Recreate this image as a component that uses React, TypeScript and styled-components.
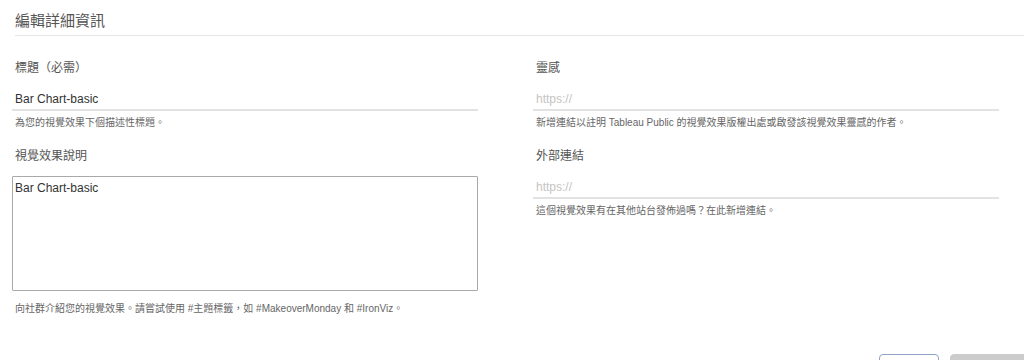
import React from "react";
import styled, { createGlobalStyle } from "styled-components";

const Global = createGlobalStyle`
  html, body { margin: 0; padding: 0; background: #fff; }
  body {
    font-family: "Liberation Sans", "Noto Sans CJK TC", sans-serif;
    overflow: hidden;
  }
  * { box-sizing: border-box; }
`;

const Page = styled.div`
  width: 1024px;
  height: 360px;
  overflow: hidden;
  display: flex;
  flex-direction: column;
  & > * { flex-shrink: 0; }
`;

const Header = styled.div`
  margin-left: 15px;
  height: 36px;
  border-bottom: 1px solid #e6e6e6;
  padding-top: 11px;
`;

const Title = styled.h1`
  margin: 0;
  font-size: 15px;
  line-height: 20px;
  font-weight: normal;
  color: #555;
`;

const Body = styled.div`
  display: grid;
  grid-template-columns: 466px 466px;
  column-gap: 55px;
  padding: 23px 0 0 12px;
`;

const Column = styled.div`
  display: flex;
  flex-direction: column;
`;

const Field = styled.div<{ $gap?: number }>`
  display: flex;
  flex-direction: column;
  margin-bottom: ${(p) => p.$gap ?? 17}px;
`;

const Label = styled.label`
  font-size: 12px;
  line-height: 18px;
  color: #555;
  padding-left: 3px;
`;

const LineInput = styled.input`
  border: none;
  border-bottom: 2px solid #e2e2e2;
  outline: none;
  font-family: inherit;
  font-size: 12px;
  line-height: 14px;
  height: 34px;
  padding: 15px 3px 3px;
  color: #333;
  background: transparent;
  &::placeholder { color: #c4c4c4; }
`;

const Area = styled.textarea`
  margin-top: 11px;
  height: 115px;
  border: 1px solid #a9a9a9;
  border-radius: 1px;
  font-family: inherit;
  font-size: 12px;
  line-height: 14px;
  padding: 4px 2px;
  color: #333;
  resize: none;
  outline: none;
`;

const Help = styled.div<{ $top?: number }>`
  margin-top: ${(p) => p.$top ?? 5}px;
  font-size: 10px;
  line-height: 14px;
  color: #666;
  padding-left: 3px;
`;

const Footer = styled.div`
  display: flex;
  justify-content: flex-end;
  gap: 11px;
  margin-top: 38px;
  margin-right: -20px;
`;

const Button = styled.button<{ $primary?: boolean }>`
  width: ${(p) => (p.$primary ? 94 : 60)}px;
  height: 32px;
  border-radius: 4px;
  border: 1px solid ${(p) => (p.$primary ? "#cccccc" : "#8fa4c4")};
  background: ${(p) => (p.$primary ? "#cccccc" : "#fff")};
  font-family: inherit;
  font-size: 12px;
  color: #fff;
`;

export default function App() {
  return (
    <Page>
      <Global />
      <Header>
        <Title>編輯詳細資訊</Title>
      </Header>
      <Body>
        <Column>
          <Field>
            <Label>標題（必需）</Label>
            <LineInput defaultValue="Bar Chart-basic" />
            <Help>為您的視覺效果下個描述性標題。</Help>
          </Field>
          <Field $gap={0}>
            <Label>視覺效果說明</Label>
            <Area defaultValue="Bar Chart-basic" />
            <Help $top={11}>
              向社群介紹您的視覺效果。請嘗試使用 #主題標籤，如 #MakeoverMonday 和 #IronViz。
            </Help>
          </Field>
        </Column>
        <Column>
          <Field>
            <Label>靈感</Label>
            <LineInput placeholder="https://" />
            <Help>新增連結以註明 Tableau Public 的視覺效果版權出處或啟發該視覺效果靈感的作者。</Help>
          </Field>
          <Field>
            <Label>外部連結</Label>
            <LineInput placeholder="https://" />
            <Help>這個視覺效果有在其他站台發佈過嗎？在此新增連結。</Help>
          </Field>
        </Column>
      </Body>
      <Footer>
        <Button aria-label="取消" />
        <Button $primary aria-label="儲存" />
      </Footer>
    </Page>
  );
}
